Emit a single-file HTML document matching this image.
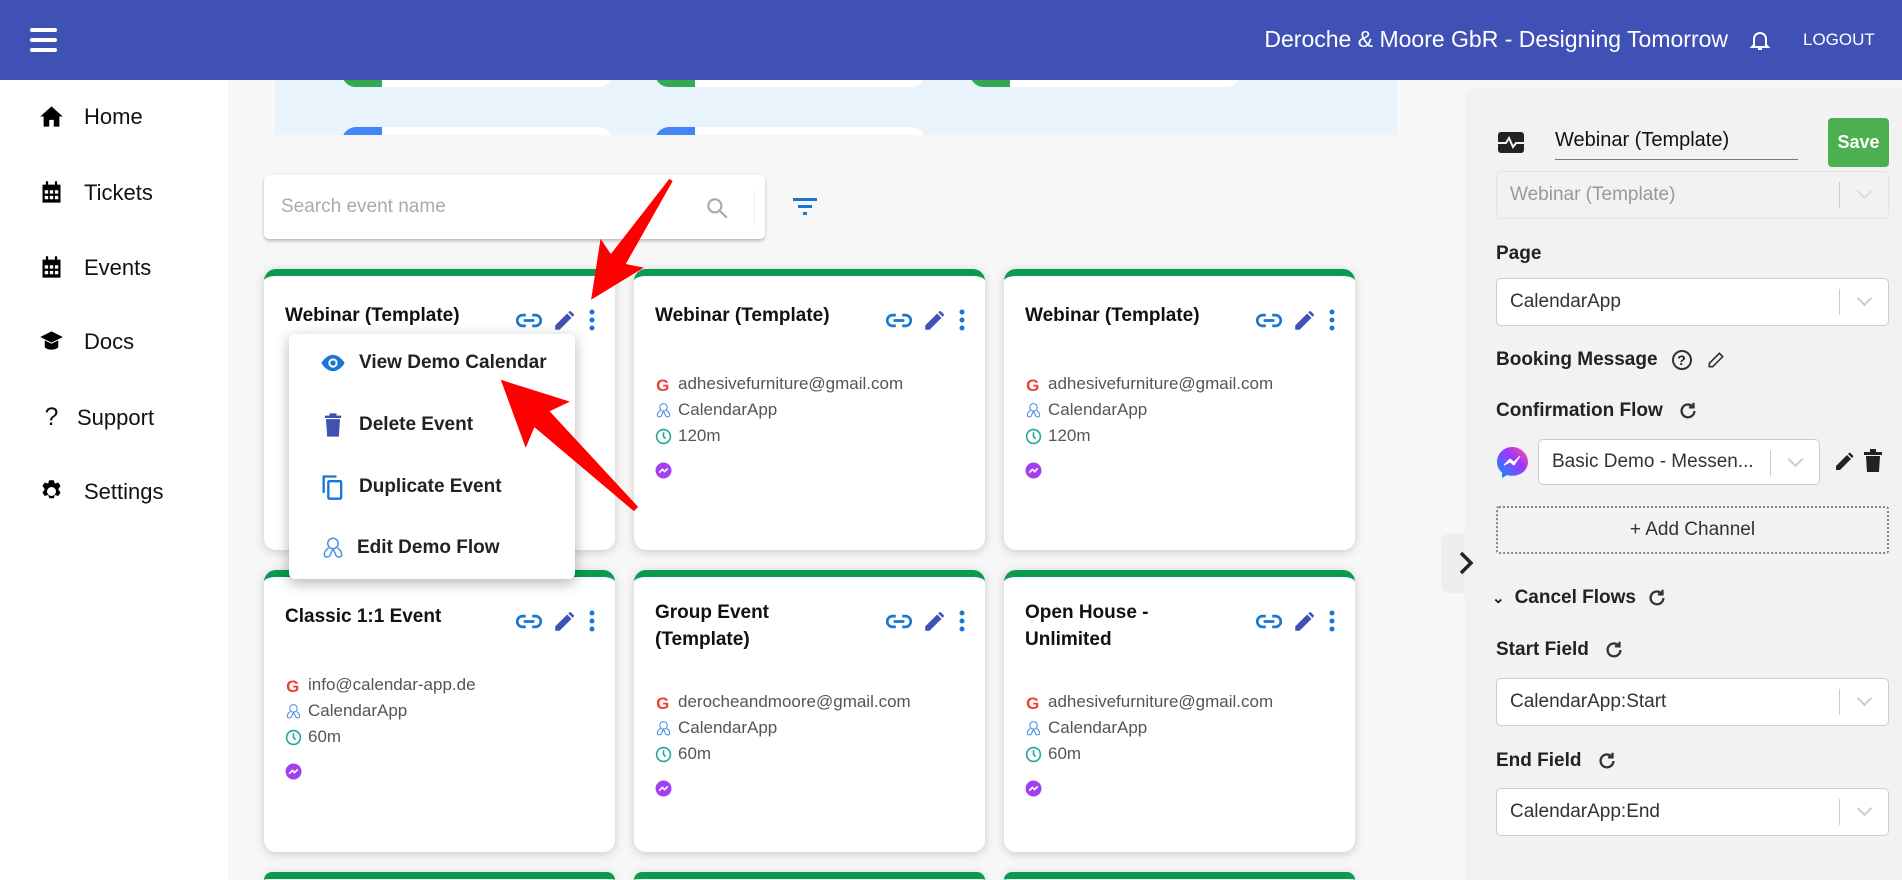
<!DOCTYPE html>
<html style="overflow:hidden;width:1902px;height:880px"><head><meta charset="utf-8"><style>
*{box-sizing:border-box;margin:0;padding:0}
body{width:1902px;height:880px;overflow:hidden;background:#f7f7f7;font-family:"Liberation Sans",Arial,sans-serif;position:relative;color:#222}
.hdr{position:absolute;left:0;top:0;width:1902px;height:80px;background:#3f51b5;color:#fff}
.side{position:absolute;left:0;top:80px;width:228px;height:800px;background:#fff}
.nav{position:absolute;left:38px;font-size:22px;color:#111;display:flex;align-items:center}
.nav svg{width:27px;height:27px;margin-right:19px}
.banner{position:absolute;left:275px;top:80px;width:1122px;height:55px;background:#e8f3fc;overflow:hidden}
.search{position:absolute;left:264px;top:175px;width:501px;height:64px;background:#fff;border-radius:5px;box-shadow:0 2px 3px rgba(0,0,0,.25)}
.card{position:absolute;width:351px;background:#fff;border-radius:12px;border-top:7px solid #0a9a52;box-shadow:0 2px 10px rgba(0,0,0,.18);padding:26px 0 0 21px}
.ttl{font-weight:bold;font-size:19px;line-height:27px;width:220px;color:#111}
.ic{position:absolute;top:31px;right:19px;display:flex;gap:10px;align-items:center}
.det{font-size:17px;color:#555;line-height:26px}
.det div{display:flex;align-items:center}
.det svg{width:17px;height:17px;margin-right:6px}
.menu{position:absolute;left:289px;top:334px;width:286px;height:245px;background:#fff;border-radius:6px;box-shadow:0 4px 14px rgba(0,0,0,.3)}
.mi{position:absolute;left:30px;display:flex;align-items:center;font-size:19px;font-weight:bold;color:#222}
.mi svg{width:28px;height:28px;margin-right:12px}
.panel{position:absolute;left:1465px;top:87px;width:437px;height:793px;background:#f2f2f2;border-top-left-radius:14px}
.lbl{position:absolute;left:31px;font-weight:bold;font-size:19px;color:#222;display:flex;align-items:center;gap:14px}
.sel{position:absolute;left:31px;width:393px;height:48px;background:#fff;border:1px solid #ccc;border-radius:5px;font-size:19px;color:#333;padding-left:13px;line-height:46px}
.sel:after{content:"";position:absolute;right:48px;top:10px;height:26px;border-left:1px solid #ccc}
.sel i{position:absolute;right:18px;top:14px;width:11px;height:11px;border-right:2px solid #ccc;border-bottom:2px solid #ccc;transform:rotate(45deg)}
</style></head><body>
<div class="hdr">
 <div style="position:absolute;left:30px;top:28px;width:27px"><div style="height:4px;background:#fff;border-radius:2px;margin-bottom:6px"></div><div style="height:4px;background:#fff;border-radius:2px;margin-bottom:6px"></div><div style="height:4px;background:#fff;border-radius:2px"></div></div>
 <div style="position:absolute;right:174px;top:26px;font-size:23px">Deroche &amp; Moore GbR - Designing Tomorrow</div>
 <svg style="position:absolute;left:1748px;top:28px" width="24" height="24" viewBox="0 0 24 24" fill="none" stroke="#fff" stroke-width="2"><path d="M6 17V11a6 6 0 0 1 12 0v6l2 2H4z M10 21h4"/></svg>
 <div style="position:absolute;left:1803px;top:30px;font-size:17px">LOGOUT</div>
</div>
<div class="side">
 <div class="nav" style="top:23px"><svg viewBox="0 0 24 24"><path d="M12 3L2 12h3v9h5v-6h4v6h5v-9h3z"/></svg>Home</div>
 <div class="nav" style="top:99px"><svg viewBox="0 0 24 24"><path d="M4 5h16v16H4z M7 2h2v4H7z M15 2h2v4h-2z" /><g fill="#fff"><rect x="6" y="10" width="3" height="3"/><rect x="10.5" y="10" width="3" height="3"/><rect x="15" y="10" width="3" height="3"/><rect x="6" y="15" width="3" height="3"/><rect x="10.5" y="15" width="3" height="3"/><rect x="15" y="15" width="3" height="3"/></g></svg>Tickets</div>
 <div class="nav" style="top:174px"><svg viewBox="0 0 24 24"><path d="M4 5h16v16H4z M7 2h2v4H7z M15 2h2v4h-2z" /><g fill="#fff"><rect x="6" y="10" width="3" height="3"/><rect x="10.5" y="10" width="3" height="3"/><rect x="15" y="10" width="3" height="3"/><rect x="6" y="15" width="3" height="3"/><rect x="10.5" y="15" width="3" height="3"/><rect x="15" y="15" width="3" height="3"/></g></svg>Events</div>
 <div class="nav" style="top:248px"><svg viewBox="0 0 24 24"><path d="M12 3L2 8l10 5 10-5z M6 11v6c2 3 10 3 12 0v-6l-6 3z"/></svg>Docs</div>
 <div class="nav" style="top:323px"><span style="width:27px;margin-right:12px;text-align:center;font-size:25px">?</span>Support</div>
 <div class="nav" style="top:398px"><svg viewBox="0 0 24 24"><path d="M12 8a4 4 0 1 0 0 8 4 4 0 0 0 0-8zM10 2h4l1 3 3-1 2 3-2 3 2 3-2 3-3-1-1 3h-4l-1-3-3 1-2-3 2-3-2-3 2-3 3 1z" fill-rule="evenodd"/></svg>Settings</div>
</div>
<div class="banner">
 <div style="position:absolute;left:67px;top:-20px;width:270px;height:27px;background:#fff;border-radius:14px"><div style="width:40px;height:27px;background:#34a853;border-radius:14px 0 0 14px"></div></div>
 <div style="position:absolute;left:380px;top:-20px;width:270px;height:27px;background:#fff;border-radius:14px"><div style="width:40px;height:27px;background:#34a853;border-radius:14px 0 0 14px"></div></div>
 <div style="position:absolute;left:695px;top:-20px;width:270px;height:27px;background:#fff;border-radius:14px"><div style="width:40px;height:27px;background:#34a853;border-radius:14px 0 0 14px"></div></div>
 <div style="position:absolute;left:67px;top:47px;width:270px;height:27px;background:#fff;border-radius:14px"><div style="width:40px;height:27px;background:#4285f4;border-radius:14px 0 0 0"></div></div>
 <div style="position:absolute;left:380px;top:47px;width:270px;height:27px;background:#fff;border-radius:14px"><div style="width:40px;height:27px;background:#4285f4;border-radius:14px 0 0 0"></div></div>
</div>
<div class="search">
 <div style="position:absolute;left:17px;top:21px;font-size:19px;color:#aaa">Search event name</div>
 <svg style="position:absolute;left:440px;top:20px" width="26" height="26" viewBox="0 0 24 24" fill="none" stroke="#aaa" stroke-width="2"><circle cx="10" cy="10" r="6"/><path d="M15 15l6 6"/></svg>
 <div style="position:absolute;left:490px;top:14px;height:36px;border-left:1px solid #eee"></div>
</div>
<svg style="position:absolute;left:792px;top:196px" width="26" height="22" viewBox="0 0 26 22" fill="#1976d2"><rect x="1" y="2" width="24" height="3"/><rect x="6" y="9" width="14" height="3"/><rect x="11" y="16" width="4" height="3"/></svg>

<!-- cards -->
<div class="card" style="left:264px;top:269px;height:281px"><div class="ttl">Webinar (Template)</div><div class="ic"><svg width="26" height="15" viewBox="0 0 24 14" fill="none" stroke="#1976d2" stroke-width="2.5"><path d="M9 2H6a5 5 0 0 0 0 10h3M15 2h3a5 5 0 0 1 0 10h-3M7 7h10"/></svg><svg width="26" height="26" viewBox="0 0 24 24" fill="#3f51b5"><path d="M3 17v4h4L18 10l-4-4zM20 8a1 1 0 0 0 0-1.4l-2.6-2.6a1 1 0 0 0-1.4 0L15 5l4 4z"/></svg><svg width="8" height="22" viewBox="0 0 8 22" fill="#1976d2"><circle cx="4" cy="3" r="2.5"/><circle cx="4" cy="11" r="2.5"/><circle cx="4" cy="19" r="2.5"/></svg></div></div>
<div class="card" style="left:634px;top:269px;height:281px"><div class="ttl">Webinar (Template)</div><div class="ic"><svg width="26" height="15" viewBox="0 0 24 14" fill="none" stroke="#1976d2" stroke-width="2.5"><path d="M9 2H6a5 5 0 0 0 0 10h3M15 2h3a5 5 0 0 1 0 10h-3M7 7h10"/></svg><svg width="26" height="26" viewBox="0 0 24 24" fill="#3f51b5"><path d="M3 17v4h4L18 10l-4-4zM20 8a1 1 0 0 0 0-1.4l-2.6-2.6a1 1 0 0 0-1.4 0L15 5l4 4z"/></svg><svg width="8" height="22" viewBox="0 0 8 22" fill="#1976d2"><circle cx="4" cy="3" r="2.5"/><circle cx="4" cy="11" r="2.5"/><circle cx="4" cy="19" r="2.5"/></svg></div>
 <div class="det" style="margin-top:42px"><div><svg viewBox="0 0 16 16"><text x="1" y="14" font-size="16" font-weight="bold" fill="#ea4335" font-family="Liberation Sans">G</text></svg>adhesivefurniture@gmail.com</div><div><svg viewBox="0 0 16 16" fill="none" stroke="#4a90e2"><circle cx="8" cy="5" r="3.5"/><path d="M5 8c-3 2-4 6-1 6s2-3 4-5c2 2 1 5 4 5s2-4-1-6"/></svg>CalendarApp</div><div><svg viewBox="0 0 16 16" fill="none" stroke="#26a69a" stroke-width="1.5"><circle cx="8" cy="8" r="6.5"/><path d="M8 4v4l2 2"/></svg>120m</div><div style="margin-top:13px"><svg viewBox="0 0 16 16"><circle cx="8" cy="8" r="7.5" fill="#a33ff0"/><path d="M4 10l3-3 2 2 3-3" stroke="#fff" fill="none" stroke-width="1.5"/></svg></div></div></div>
<div class="card" style="left:1004px;top:269px;height:281px"><div class="ttl">Webinar (Template)</div><div class="ic"><svg width="26" height="15" viewBox="0 0 24 14" fill="none" stroke="#1976d2" stroke-width="2.5"><path d="M9 2H6a5 5 0 0 0 0 10h3M15 2h3a5 5 0 0 1 0 10h-3M7 7h10"/></svg><svg width="26" height="26" viewBox="0 0 24 24" fill="#3f51b5"><path d="M3 17v4h4L18 10l-4-4zM20 8a1 1 0 0 0 0-1.4l-2.6-2.6a1 1 0 0 0-1.4 0L15 5l4 4z"/></svg><svg width="8" height="22" viewBox="0 0 8 22" fill="#1976d2"><circle cx="4" cy="3" r="2.5"/><circle cx="4" cy="11" r="2.5"/><circle cx="4" cy="19" r="2.5"/></svg></div>
 <div class="det" style="margin-top:42px"><div><svg viewBox="0 0 16 16"><text x="1" y="14" font-size="16" font-weight="bold" fill="#ea4335" font-family="Liberation Sans">G</text></svg>adhesivefurniture@gmail.com</div><div><svg viewBox="0 0 16 16" fill="none" stroke="#4a90e2"><circle cx="8" cy="5" r="3.5"/><path d="M5 8c-3 2-4 6-1 6s2-3 4-5c2 2 1 5 4 5s2-4-1-6"/></svg>CalendarApp</div><div><svg viewBox="0 0 16 16" fill="none" stroke="#26a69a" stroke-width="1.5"><circle cx="8" cy="8" r="6.5"/><path d="M8 4v4l2 2"/></svg>120m</div><div style="margin-top:13px"><svg viewBox="0 0 16 16"><circle cx="8" cy="8" r="7.5" fill="#a33ff0"/><path d="M4 10l3-3 2 2 3-3" stroke="#fff" fill="none" stroke-width="1.5"/></svg></div></div></div>

<div class="card" style="left:264px;top:570px;height:282px"><div class="ttl">Classic 1:1 Event</div><div class="ic"><svg width="26" height="15" viewBox="0 0 24 14" fill="none" stroke="#1976d2" stroke-width="2.5"><path d="M9 2H6a5 5 0 0 0 0 10h3M15 2h3a5 5 0 0 1 0 10h-3M7 7h10"/></svg><svg width="26" height="26" viewBox="0 0 24 24" fill="#3f51b5"><path d="M3 17v4h4L18 10l-4-4zM20 8a1 1 0 0 0 0-1.4l-2.6-2.6a1 1 0 0 0-1.4 0L15 5l4 4z"/></svg><svg width="8" height="22" viewBox="0 0 8 22" fill="#1976d2"><circle cx="4" cy="3" r="2.5"/><circle cx="4" cy="11" r="2.5"/><circle cx="4" cy="19" r="2.5"/></svg></div>
 <div class="det" style="margin-top:42px"><div><svg viewBox="0 0 16 16"><text x="1" y="14" font-size="16" font-weight="bold" fill="#ea4335" font-family="Liberation Sans">G</text></svg>info@calendar-app.de</div><div><svg viewBox="0 0 16 16" fill="none" stroke="#4a90e2"><circle cx="8" cy="5" r="3.5"/><path d="M5 8c-3 2-4 6-1 6s2-3 4-5c2 2 1 5 4 5s2-4-1-6"/></svg>CalendarApp</div><div><svg viewBox="0 0 16 16" fill="none" stroke="#26a69a" stroke-width="1.5"><circle cx="8" cy="8" r="6.5"/><path d="M8 4v4l2 2"/></svg>60m</div><div style="margin-top:13px"><svg viewBox="0 0 16 16"><circle cx="8" cy="8" r="7.5" fill="#a33ff0"/><path d="M4 10l3-3 2 2 3-3" stroke="#fff" fill="none" stroke-width="1.5"/></svg></div></div></div>
<div class="card" style="left:634px;top:570px;height:282px;padding-top:22px"><div class="ttl">Group Event<br>(Template)</div><div class="ic"><svg width="26" height="15" viewBox="0 0 24 14" fill="none" stroke="#1976d2" stroke-width="2.5"><path d="M9 2H6a5 5 0 0 0 0 10h3M15 2h3a5 5 0 0 1 0 10h-3M7 7h10"/></svg><svg width="26" height="26" viewBox="0 0 24 24" fill="#3f51b5"><path d="M3 17v4h4L18 10l-4-4zM20 8a1 1 0 0 0 0-1.4l-2.6-2.6a1 1 0 0 0-1.4 0L15 5l4 4z"/></svg><svg width="8" height="22" viewBox="0 0 8 22" fill="#1976d2"><circle cx="4" cy="3" r="2.5"/><circle cx="4" cy="11" r="2.5"/><circle cx="4" cy="19" r="2.5"/></svg></div>
 <div class="det" style="margin-top:36px"><div><svg viewBox="0 0 16 16"><text x="1" y="14" font-size="16" font-weight="bold" fill="#ea4335" font-family="Liberation Sans">G</text></svg>derocheandmoore@gmail.com</div><div><svg viewBox="0 0 16 16" fill="none" stroke="#4a90e2"><circle cx="8" cy="5" r="3.5"/><path d="M5 8c-3 2-4 6-1 6s2-3 4-5c2 2 1 5 4 5s2-4-1-6"/></svg>CalendarApp</div><div><svg viewBox="0 0 16 16" fill="none" stroke="#26a69a" stroke-width="1.5"><circle cx="8" cy="8" r="6.5"/><path d="M8 4v4l2 2"/></svg>60m</div><div style="margin-top:13px"><svg viewBox="0 0 16 16"><circle cx="8" cy="8" r="7.5" fill="#a33ff0"/><path d="M4 10l3-3 2 2 3-3" stroke="#fff" fill="none" stroke-width="1.5"/></svg></div></div></div>
<div class="card" style="left:1004px;top:570px;height:282px;padding-top:22px"><div class="ttl">Open House -<br>Unlimited</div><div class="ic"><svg width="26" height="15" viewBox="0 0 24 14" fill="none" stroke="#1976d2" stroke-width="2.5"><path d="M9 2H6a5 5 0 0 0 0 10h3M15 2h3a5 5 0 0 1 0 10h-3M7 7h10"/></svg><svg width="26" height="26" viewBox="0 0 24 24" fill="#3f51b5"><path d="M3 17v4h4L18 10l-4-4zM20 8a1 1 0 0 0 0-1.4l-2.6-2.6a1 1 0 0 0-1.4 0L15 5l4 4z"/></svg><svg width="8" height="22" viewBox="0 0 8 22" fill="#1976d2"><circle cx="4" cy="3" r="2.5"/><circle cx="4" cy="11" r="2.5"/><circle cx="4" cy="19" r="2.5"/></svg></div>
 <div class="det" style="margin-top:36px"><div><svg viewBox="0 0 16 16"><text x="1" y="14" font-size="16" font-weight="bold" fill="#ea4335" font-family="Liberation Sans">G</text></svg>adhesivefurniture@gmail.com</div><div><svg viewBox="0 0 16 16" fill="none" stroke="#4a90e2"><circle cx="8" cy="5" r="3.5"/><path d="M5 8c-3 2-4 6-1 6s2-3 4-5c2 2 1 5 4 5s2-4-1-6"/></svg>CalendarApp</div><div><svg viewBox="0 0 16 16" fill="none" stroke="#26a69a" stroke-width="1.5"><circle cx="8" cy="8" r="6.5"/><path d="M8 4v4l2 2"/></svg>60m</div><div style="margin-top:13px"><svg viewBox="0 0 16 16"><circle cx="8" cy="8" r="7.5" fill="#a33ff0"/><path d="M4 10l3-3 2 2 3-3" stroke="#fff" fill="none" stroke-width="1.5"/></svg></div></div></div>
<div class="card" style="left:264px;top:872px;height:8px;padding:0;border-radius:12px 12px 0 0"></div>
<div class="card" style="left:634px;top:872px;height:8px;padding:0;border-radius:12px 12px 0 0"></div>
<div class="card" style="left:1004px;top:872px;height:8px;padding:0;border-radius:12px 12px 0 0"></div>

<div class="menu">
 <div class="mi" style="top:15px"><svg viewBox="0 0 24 24"><path d="M12 5C6 5 2 12 2 12s4 7 10 7 10-7 10-7-4-7-10-7z" fill="#1976d2"/><circle cx="12" cy="12" r="4" fill="#fff"/><circle cx="12" cy="12" r="2.3" fill="#1976d2"/></svg>View Demo Calendar</div>
 <div class="mi" style="top:77px"><svg viewBox="0 0 24 24" fill="#3f51b5"><path d="M6 7h12l-1 15H7zM5 4h14v2H5zM9 2h6v2H9z"/></svg>Delete Event</div>
 <div class="mi" style="top:139px"><svg viewBox="0 0 24 24" fill="none" stroke="#1976d2" stroke-width="2"><path d="M4 17V3h11"/><rect x="8" y="7" width="11" height="15" rx="1"/></svg>Duplicate Event</div>
 <div class="mi" style="top:202px"><svg viewBox="0 0 16 16" style="width:24px;height:24px;margin-left:2px;margin-right:12px" fill="none" stroke="#4a90e2"><circle cx="8" cy="5" r="3.5"/><path d="M5 8c-3 2-4 6-1 6s2-3 4-5c2 2 1 5 4 5s2-4-1-6"/></svg>Edit Demo Flow</div>
</div>

<svg style="position:absolute;left:0;top:0" width="1902" height="880">
 <g transform="translate(671,180) rotate(123.7)"><polygon points="0,-2 95,-9 88,-26 144,0 88,26 95,9 0,2" fill="#f00"/></g>
 <g transform="translate(636,509) rotate(223.7)"><polygon points="0,-3 130,-11 122,-32 187,0 122,32 130,11 0,3" fill="#f00"/></g>
</svg>

<div style="position:absolute;left:1441px;top:534px;width:30px;height:59px;background:#eee;border-radius:8px 0 0 8px"></div>
<div class="panel">
 <svg style="position:absolute;left:33px;top:45px" width="26" height="21" viewBox="0 0 26 21"><rect width="26" height="21" rx="3" fill="#222"/><path d="M0 11h8l3-5 4 9 3-4h8" stroke="#f2f2f2" stroke-width="2" fill="none"/></svg>
 <div style="position:absolute;left:90px;top:42px;font-size:20px;color:#111">Webinar (Template)</div>
 <div style="position:absolute;left:90px;top:72px;width:243px;border-top:1px solid #777"></div>
 <div style="position:absolute;left:363px;top:31px;width:61px;height:49px;background:#4caf50;border-radius:4px;color:#fff;font-weight:bold;font-size:18px;text-align:center;line-height:49px">Save</div>
 <div class="sel" style="top:84px;background:#f2f2f2;color:#999;border-color:#e4e4e4">Webinar (Template)<i style="border-color:#ddd"></i></div>
 <div class="lbl" style="top:156px">Page</div>
 <div class="sel" style="top:191px">CalendarApp<i></i></div>
 <div class="lbl" style="top:262px">Booking Message <span style="width:20px;height:20px;border:2px solid #333;border-radius:50%;font-size:14px;text-align:center;line-height:17px">?</span><svg width="20" height="20" viewBox="0 0 24 24" fill="none" stroke="#333" stroke-width="2"><path d="M4 20v-4L16 4l4 4L8 20z"/></svg></div>
 <div class="lbl" style="top:313px">Confirmation Flow <svg width="22" height="22" viewBox="0 0 24 24" fill="none" stroke="#333" stroke-width="2.5"><path d="M19 12a7 7 0 1 1-2-5"/><path d="M18 3v5h-5" /></svg></div>
 <svg style="position:absolute;left:31px;top:359px" width="33" height="33" viewBox="0 0 33 33"><defs><linearGradient id="m" x1="0" y1="1" x2="1" y2="0"><stop offset="0" stop-color="#09f"/><stop offset=".6" stop-color="#a033ff"/><stop offset="1" stop-color="#ff5c87"/></linearGradient></defs><path d="M16.5 1C8 1 1 7.5 1 16c0 4.5 2 8 5 10.5V32l5-3c2 .6 3.5.8 5.5.8C25 29.8 32 23.5 32 16S25 1 16.5 1z" fill="url(#m)"/><path d="M8 19l6-6 4 3 6-6-6 9-4-3z" fill="#fff" stroke="#fff"/></svg>
 <div class="sel" style="top:352px;left:73px;width:282px;height:46px;line-height:44px">Basic Demo - Messen...<i></i></div>
 <svg style="position:absolute;left:368px;top:362px" width="24" height="24" viewBox="0 0 24 24" fill="#222"><path d="M3 17v4h4L18 10l-4-4zM20 8a1 1 0 0 0 0-1.4l-2.6-2.6a1 1 0 0 0-1.4 0L15 5l4 4z"/></svg>
 <svg style="position:absolute;left:398px;top:362px" width="20" height="24" viewBox="0 0 20 24" fill="#222"><path d="M3 7h14l-1 16H4zM1 3h18v3H1zM7 0h6v3H7z"/></svg>
 <div style="position:absolute;left:31px;top:419px;width:393px;height:48px;border:2px dotted #888;border-radius:3px;text-align:center;font-size:19px;line-height:44px;color:#333">+ Add Channel</div>
 <div class="lbl" style="top:500px;left:27px;gap:10px"><span style="font-size:15px">&#8964;</span>Cancel Flows <svg width="22" height="22" viewBox="0 0 24 24" fill="none" stroke="#333" stroke-width="2.5"><path d="M19 12a7 7 0 1 1-2-5"/><path d="M18 3v5h-5" /></svg></div>
 <div class="lbl" style="top:552px">Start Field <svg width="22" height="22" viewBox="0 0 24 24" fill="none" stroke="#333" stroke-width="2.5"><path d="M19 12a7 7 0 1 1-2-5"/><path d="M18 3v5h-5" /></svg></div>
 <div class="sel" style="top:591px">CalendarApp:Start<i></i></div>
 <div class="lbl" style="top:663px">End Field <svg width="22" height="22" viewBox="0 0 24 24" fill="none" stroke="#333" stroke-width="2.5"><path d="M19 12a7 7 0 1 1-2-5"/><path d="M18 3v5h-5" /></svg></div>
 <div class="sel" style="top:701px">CalendarApp:End<i></i></div>
</div>
<svg style="position:absolute;left:1458px;top:550px" width="16" height="26" viewBox="0 0 16 26" fill="none" stroke="#222" stroke-width="3.5"><path d="M3 3l10 10L3 23"/></svg>
</body></html>
